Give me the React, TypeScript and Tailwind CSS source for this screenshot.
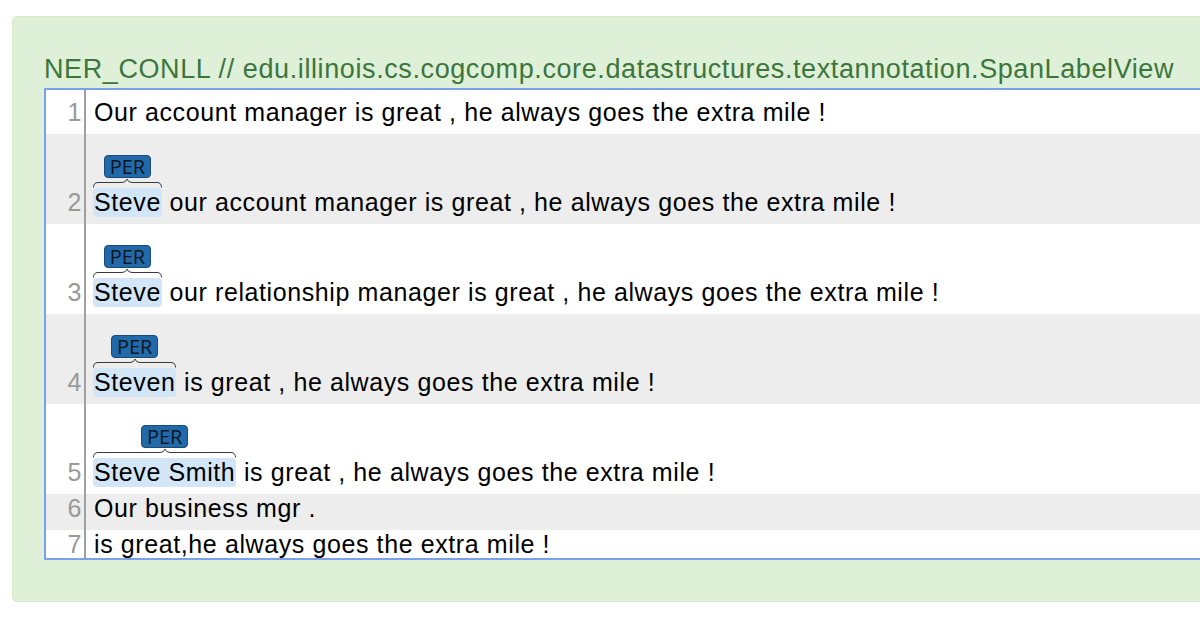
import React from 'react'

type Row = {
  n: number
  span?: string
  rest: string
}

const rows: Row[] = [
  { n: 1, rest: 'Our account manager is great , he always goes the extra mile !' },
  { n: 2, span: 'Steve', rest: 'our account manager is great , he always goes the extra mile !' },
  { n: 3, span: 'Steve', rest: 'our relationship manager is great , he always goes the extra mile !' },
  { n: 4, span: 'Steven', rest: 'is great , he always goes the extra mile !' },
  { n: 5, span: 'Steve Smith', rest: 'is great , he always goes the extra mile !' },
  { n: 6, rest: 'Our business mgr .' },
  { n: 7, rest: 'is great,he always goes the extra mile !' },
]

// curly brace under the label, built from fixed curls and stretchy lines
function Brace() {
  return (
    <div className="flex h-[10px] w-full items-start text-[#3a3a3a]">
      <svg width="6" height="10" viewBox="0 0 6 10" className="shrink-0">
        <path d="M0.5 9.5 Q0.5 4.5 5 4.5 L6 4.5" fill="none" stroke="currentColor" strokeWidth="1" />
      </svg>
      <div className="mt-[4px] h-px flex-1 bg-[#3a3a3a]" />
      <svg width="10" height="10" viewBox="0 0 10 10" className="shrink-0">
        <path d="M0 4.5 Q4 4.5 5 1 Q6 4.5 10 4.5" fill="none" stroke="currentColor" strokeWidth="1" />
      </svg>
      <div className="mt-[4px] h-px flex-1 bg-[#3a3a3a]" />
      <svg width="6" height="10" viewBox="0 0 6 10" className="shrink-0">
        <path d="M0 4.5 L1 4.5 Q5.5 4.5 5.5 9.5" fill="none" stroke="currentColor" strokeWidth="1" />
      </svg>
    </div>
  )
}

function LineRow({ row, shaded }: { row: Row; shaded: boolean }) {
  return (
    <div className={`flex ${shaded ? 'bg-[#ededed]' : 'bg-white'}`}>
      {/* gutter */}
      <div className="flex w-[40px] shrink-0 items-end justify-end border-r-2 border-[#a0a0a0] pr-[2px] pb-[7px] text-[#999]">
        <span className="leading-[29px]">{row.n}</span>
      </div>
      <div className={`flex items-end whitespace-nowrap pl-[7px] pb-[7px] ${row.n === 1 ? 'pt-[8px]' : ''}`}>
        {row.span ? (
          <>
            <div className="flex flex-col items-center pt-[21px]">
              <div className="flex h-[23px] w-[47px] shrink-0 items-center justify-center rounded-[4px] border border-[#1a4a75] bg-[#2169a8] font-['Open_Sans',sans-serif] text-[20px] font-medium leading-none tracking-normal text-[#0a1622]">
                PER
              </div>
              <Brace />
              <span className="rounded-[4px] bg-[#d3e6f7] px-[1px] leading-[29px]">{row.span}</span>
            </div>
            <span className="leading-[29px]">&nbsp;{row.rest}</span>
          </>
        ) : (
          <span className="pl-[1px] leading-[29px]">{row.rest}</span>
        )}
      </div>
    </div>
  )
}

export default function App() {
  return (
    <div className="h-[620px] w-[1200px] overflow-hidden bg-white font-['Liberation_Sans',Arial,sans-serif]">
      <div className="ml-[12px] mt-[16px] h-[586px] w-[1260px] rounded-l-[5px] border border-[#d6e9c6] bg-[#dff0d8] pl-[31px] pt-[37px]">
        <h3 className="mb-[4px] whitespace-nowrap text-[27px] leading-[30px] tracking-[0.6px] text-[#3c763d]">
          NER_CONLL // edu.illinois.cs.cogcomp.core.datastructures.textannotation.SpanLabelView
        </h3>
        <div className="h-[472px] overflow-hidden border-2 border-[#7ca0f0] text-[25px] tracking-[0.6px] text-black">
          {rows.map((r, i) => (
            <LineRow key={r.n} row={r} shaded={i % 2 === 1} />
          ))}
        </div>
      </div>
    </div>
  )
}
